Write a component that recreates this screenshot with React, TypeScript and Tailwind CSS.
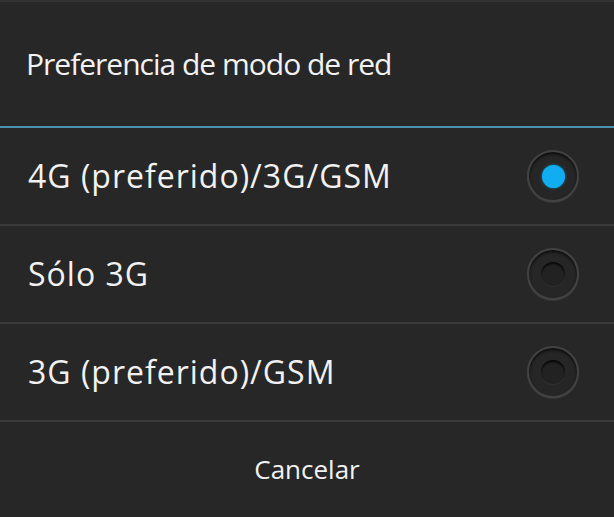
import React from 'react';

const options = ['4G (preferido)/3G/GSM', 'Sólo 3G', '3G (preferido)/GSM'];

const Radio = ({ checked }: { checked: boolean }) => (
  <div className="w-[52px] h-[52px] rounded-full bg-[#262626] border-2 border-[#424242] shadow-[inset_0_2px_3px_rgba(0,0,0,0.7),0_1px_0_rgba(255,255,255,0.08)] flex items-center justify-center">
    {checked ? (
      <div className="w-[23px] h-[23px] rounded-full bg-[#10aef0] shadow-[0_0_3px_rgba(16,174,240,0.6)]" />
    ) : (
      <div className="w-[24px] h-[24px] rounded-full bg-[#222] shadow-[inset_0_2px_2px_rgba(0,0,0,0.8),0_1px_1px_rgba(255,255,255,0.06)]" />
    )}
  </div>
);

export default function App() {
  const selected = 0;
  return (
    <div className="w-[614px] h-[517px] bg-[#272727] flex flex-col text-[#f2f2f2]" style={{ fontFamily: '"Open Sans", sans-serif' }}>
      <div className="h-[2px] bg-[#333]" />
      <div className="h-[124px] flex items-center px-[26px] pb-[2px]">
        <span className="text-[30px] tracking-[-1px]">Preferencia de modo de red</span>
      </div>
      <div className="h-[2px] bg-[#4a90b0]" />
      {options.map((o, i) => (
        <React.Fragment key={o}>
          <div className="h-[96px] flex items-center justify-between pl-[28px] pr-[35px]">
            <span className="text-[32px] tracking-[1px]">{o}</span>
            <Radio checked={i === selected} />
          </div>
          <div className="h-[2px] bg-[#3a3a3a]" />
        </React.Fragment>
      ))}
      <div className="flex-1 flex items-center justify-center">
        <span className="text-[26px]">Cancelar</span>
      </div>
    </div>
  );
}
